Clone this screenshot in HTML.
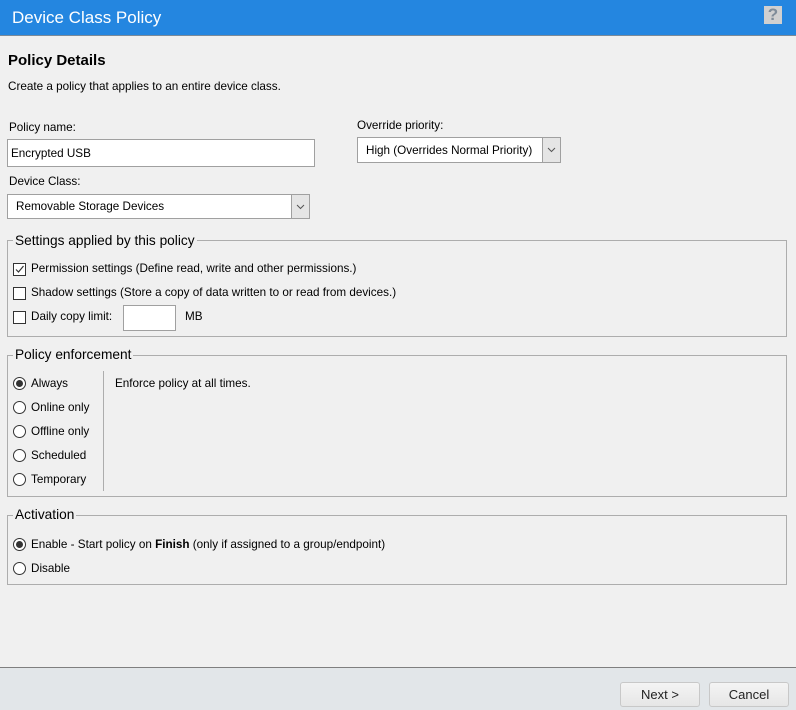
<!DOCTYPE html>
<html><head><meta charset="utf-8"><style>
*{box-sizing:border-box;margin:0;padding:0}
body{width:796px;height:710px;background:#f0f0f0;font-family:"Liberation Sans",sans-serif;font-size:11.7px;color:#000;position:relative;overflow:hidden}
.a{position:absolute;white-space:nowrap}
.hdr{left:0;top:0;width:796px;height:36px;background:#2486e0;border-bottom:1px solid #7a8a99}
.box{position:absolute;border:1px solid #adadad}
.leg{position:absolute;background:#f0f0f0;padding:0 2px;font-size:13.7px;color:#000;line-height:14px}
.in{position:absolute;background:#fff;border:1px solid #a0a0a0}
.dd{position:absolute;top:-1px;right:-1px;width:19px;border:1px solid #a0a0a0;background:#e5e5e5}
.cb{position:absolute;width:13px;height:13px;border:1px solid #333;background:#fff}
.rb{position:absolute;width:13px;height:13px;border:1px solid #333;border-radius:50%;background:#fff}
.rb.on::after{content:"";position:absolute;left:2px;top:2px;width:7px;height:7px;border-radius:50%;background:#333}
.btn{position:absolute;top:682px;width:80px;height:25px;border:1px solid #c8c8c8;border-radius:3px;background:linear-gradient(#f4f4f4,#e6e6e6);text-align:center;line-height:23px;font-size:13px;color:#222}
</style></head><body>
<div class="a hdr"></div>
<div class="a" style="left:12px;top:8px;font-size:17px;color:#fff">Device Class Policy</div>
<div class="a" style="left:764px;top:6px;width:18px;height:18px;background:#d0d0d0;color:#7f8c99;font-weight:bold;font-size:17px;text-align:center;line-height:18px">?</div>

<div class="a" style="left:8px;top:52px;font-size:15px;font-weight:bold">Policy Details</div>
<div class="a" style="left:8px;top:80px">Create a policy that applies to an entire device class.</div>

<div class="a" style="left:9px;top:121px">Policy name:</div>
<div class="in" style="left:7px;top:139px;width:308px;height:28px"><span class="a" style="left:3px;top:7px">Encrypted USB</span></div>
<div class="a" style="left:9px;top:175px">Device Class:</div>
<div class="in" style="left:7px;top:194px;width:303px;height:25px"><span class="a" style="left:8px;top:5px">Removable Storage Devices</span>
<div class="dd" style="height:25px"><svg width="17" height="23"><path d="M5 10l3.5 3.5L12 10" fill="none" stroke="#555" stroke-width="1"/></svg></div></div>

<div class="a" style="left:357px;top:119px">Override priority:</div>
<div class="in" style="left:357px;top:137px;width:204px;height:26px"><span class="a" style="left:8px;top:6px">High (Overrides Normal Priority)</span>
<div class="dd" style="height:26px"><svg width="17" height="24"><path d="M5 10l3.5 3.5L12 10" fill="none" stroke="#555" stroke-width="1"/></svg></div></div>

<div class="box" style="left:7px;top:240px;width:780px;height:97px"></div>
<div class="leg" style="left:13px;top:234px">Settings applied by this policy</div>
<div class="cb" style="left:13px;top:263px"><svg width="11" height="11" style="position:absolute;left:0;top:0"><path d="M2 5.5l2.5 2.5L9.5 2" fill="none" stroke="#333" stroke-width="1.2"/></svg></div>
<div class="a" style="left:31px;top:262px">Permission settings (Define read, write and other permissions.)</div>
<div class="cb" style="left:13px;top:287px"></div>
<div class="a" style="left:31px;top:286px">Shadow settings (Store a copy of data written to or read from devices.)</div>
<div class="cb" style="left:13px;top:311px"></div>
<div class="a" style="left:31px;top:310px">Daily copy limit:</div>
<div class="in" style="left:123px;top:305px;width:53px;height:26px"></div>
<div class="a" style="left:185px;top:310px">MB</div>

<div class="box" style="left:7px;top:355px;width:780px;height:142px"></div>
<div class="leg" style="left:13px;top:348px">Policy enforcement</div>
<div class="a" style="left:103px;top:371px;width:1px;height:120px;background:#adadad"></div>
<div class="rb on" style="left:13px;top:377px"></div><div class="a" style="left:31px;top:377px">Always</div>
<div class="rb" style="left:13px;top:401px"></div><div class="a" style="left:31px;top:401px">Online only</div>
<div class="rb" style="left:13px;top:425px"></div><div class="a" style="left:31px;top:425px">Offline only</div>
<div class="rb" style="left:13px;top:449px"></div><div class="a" style="left:31px;top:449px">Scheduled</div>
<div class="rb" style="left:13px;top:473px"></div><div class="a" style="left:31px;top:473px">Temporary</div>
<div class="a" style="left:115px;top:377px">Enforce policy at all times.</div>

<div class="box" style="left:7px;top:515px;width:780px;height:70px"></div>
<div class="leg" style="left:13px;top:508px">Activation</div>
<div class="rb on" style="left:13px;top:538px"></div><div class="a" style="left:31px;top:538px">Enable - Start policy on <b>Finish</b> (only if assigned to a group/endpoint)</div>
<div class="rb" style="left:13px;top:562px"></div><div class="a" style="left:31px;top:562px">Disable</div>

<div class="a" style="left:0;top:667px;width:796px;height:43px;background:#e2e6e9;border-top:1px solid #7f7f7f"></div>
<div class="btn" style="left:620px">Next &gt;</div>
<div class="btn" style="left:709px">Cancel</div>
</body></html>
